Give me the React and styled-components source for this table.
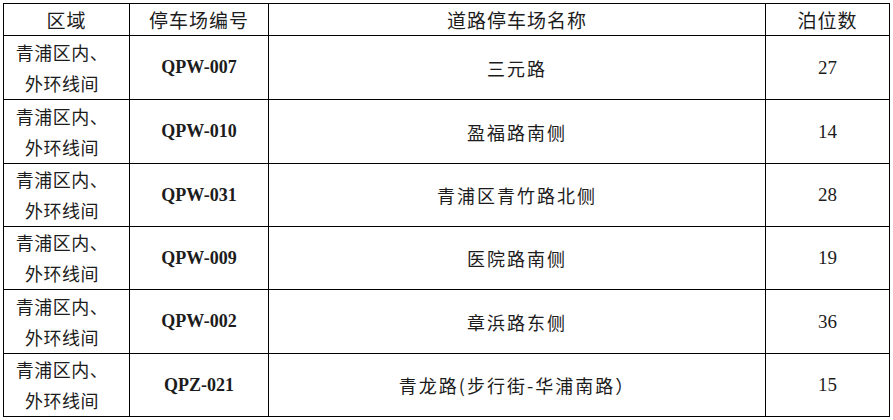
import styled, { createGlobalStyle } from 'styled-components';

const GlobalStyle = createGlobalStyle`
  html, body {
    margin: 0;
    padding: 0;
    background: #fff;
  }
  body {
    font-family: "Noto Sans CJK SC", "Liberation Serif", serif;
    color: #1c1c1c;
  }
`;

const rows = [
    { code: 'QPW-007', name: '三元路', count: 27, h: 64 },
    { code: 'QPW-010', name: '盈福路南侧', count: 14, h: 64 },
    { code: 'QPW-031', name: '青浦区青竹路北侧', count: 28, h: 63 },
    { code: 'QPW-009', name: '医院路南侧', count: 19, h: 63 },
    { code: 'QPW-002', name: '章浜路东侧', count: 36, h: 64 },
    { code: 'QPZ-021', name: '青龙路(步行街-华浦南路）', count: 15, h: 63 },
];

const App = () => {
    return (
        <Page>
            <GlobalStyle />
            <Table>
                <colgroup>
                    <col style={{ width: 126 }} />
                    <col style={{ width: 139 }} />
                    <col style={{ width: 497 }} />
                    <col style={{ width: 124 }} />
                </colgroup>
                <thead>
                    <Row $h={32}>
                        <Head>区域</Head>
                        <Head>停车场编号</Head>
                        <Head>道路停车场名称</Head>
                        <Head>泊位数</Head>
                    </Row>
                </thead>
                <tbody>
                    {rows.map((r) => (
                        <Row key={r.code} $h={r.h}>
                            <Area>
                                <Line>青浦区内、</Line>
                                <Line>外环线间</Line>
                            </Area>
                            <Code>{r.code}</Code>
                            <Name>{r.name}</Name>
                            <Count>{r.count}</Count>
                        </Row>
                    ))}
                </tbody>
            </Table>
        </Page>
    );
};

const Page = styled.div`
    padding: 3px 0 0 3px;
`
const Table = styled.table`
    border-collapse: collapse;
    table-layout: fixed;
    width: 887px;
`
const Row = styled.tr`
    height: ${(p) => p.$h}px;
`
const Cell = styled.td`
    border: 1px solid #000;
    padding: 0;
    text-align: center;
    vertical-align: middle;
`
const Head = styled(Cell).attrs({ as: 'th' })`
    font-weight: normal;
    font-size: 19px;
    letter-spacing: 1px;
    line-height: 30px;
`
const Area = styled(Cell)`
    font-size: 18px;
    line-height: 31px;
    letter-spacing: 0.5px;
    padding-right: 9px;
`
const Line = styled.div``
const Code = styled(Cell)`
    font-family: "Liberation Serif", serif;
    font-weight: bold;
    font-size: 18px;
`
const Name = styled(Cell)`
    font-size: 18px;
    letter-spacing: 2px;
`
const Count = styled(Cell)`
    font-family: "Liberation Serif", serif;
    font-size: 19px;
`

export default App;
